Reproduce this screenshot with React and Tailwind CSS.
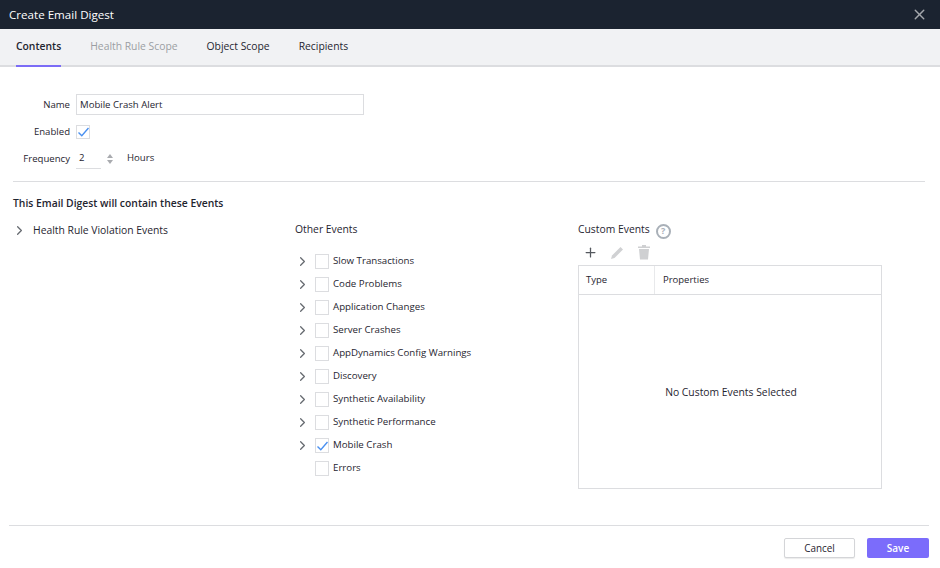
import { X, ChevronRight, Plus } from "lucide-react";

const events = [
  { name: "Slow Transactions", expand: true },
  { name: "Code Problems", expand: true },
  { name: "Application Changes", expand: true },
  { name: "Server Crashes", expand: true },
  { name: "AppDynamics Config Warnings", expand: true },
  { name: "Discovery", expand: true },
  { name: "Synthetic Availability", expand: true },
  { name: "Synthetic Performance", expand: true },
  { name: "Mobile Crash", expand: true, checked: true },
  { name: "Errors", expand: false },
];

const Tick = () => (
  <svg width="11" height="10" viewBox="0 0 11 10" fill="none" stroke="#4a90f0" strokeWidth="1.4">
    <path d="M0.5 5.5 L3.8 8.8 L10.5 1" />
  </svg>
);

const Arrow = () => (
  <ChevronRight className="w-[15px] h-[15px] text-[#666a70]" strokeWidth={2} />
);

const App = () => {
  return (
    <div className="w-[940px] h-[568px] bg-white flex flex-col text-[10.35px] text-[#1f2530] overflow-hidden font-['Open_Sans',sans-serif]">
      {/* Title bar */}
      <div className="h-[29px] bg-[#1b2330] flex items-center justify-between pl-[9px] pr-[12px] shrink-0">
        <span className="text-white text-[11.6px]">Create Email Digest</span>
        <X className="w-[17px] h-[17px] text-[#a4a7ac]" strokeWidth={2} />
      </div>

      {/* Tabs */}
      <div className="h-[38px] bg-[#f1f2f4] border-b-2 border-[#dcdde0] flex pl-[16px] gap-[29px] shrink-0">
        <div className="h-[38px] border-b-2 border-[#7b6cf6] flex items-center font-semibold">Contents</div>
        <div className="h-[36px] flex items-center text-[#9b9ea3]">Health Rule Scope</div>
        <div className="h-[36px] flex items-center">Object Scope</div>
        <div className="h-[36px] flex items-center">Recipients</div>
      </div>

      {/* Form */}
      <div className="pt-[27px] pl-[13px] pr-[15px] flex-1 flex flex-col">
        <div className="flex items-center h-[21px] text-[9.6px]">
          <label className="w-[57px] text-right pt-[1px]">Name</label>
          <div className="ml-[6px] w-[288px] h-[21px] border border-[#dcdde0] flex items-center px-[3px] pt-[1px]">
            Mobile Crash Alert
          </div>
        </div>
        <div className="flex items-center h-[14px] mt-[10px] text-[9.6px]">
          <label className="w-[57px] text-right">Enabled</label>
          <div className="ml-[6px] w-[14px] h-[14px] border border-[#dcdde0] flex items-center justify-center">
            <Tick />
          </div>
        </div>
        <div className="flex items-center h-[20px] mt-[10px] text-[9.6px]">
          <label className="w-[57px] text-right mt-[1px]">Frequency</label>
          <div className="ml-[6px] w-[25px] h-[20px] border-b border-[#dcdde0] pl-[3px] flex items-center">2</div>
          <div className="ml-[6px] flex flex-col gap-[2px]">
            <div className="w-0 h-0 border-x-[3.5px] border-x-transparent border-b-[4px] border-b-[#a9abaf]" />
            <div className="w-0 h-0 border-x-[3.5px] border-x-transparent border-t-[4px] border-t-[#a9abaf]" />
          </div>
          <span className="ml-[14px] -mt-[1px]">Hours</span>
        </div>

        <div className="mt-[12px] border-t border-[#dcdde0]" />
        <div className="mt-[14px] font-semibold leading-[14px]">This Email Digest will contain these Events</div>

        <div className="flex mt-[13px]">
          {/* Health rule events */}
          <div className="w-[282px] flex items-start h-[16px]">
            <div className="-ml-[1px]">
              <Arrow />
            </div>
            <span className="ml-[6px] leading-[16px] -mt-[1px]">Health Rule Violation Events</span>
          </div>

          {/* Other events */}
          <div className="w-[283px] -mt-[2px]">
            <div className="leading-[16px]">Other Events</div>
            <div className="mt-[17px] flex flex-col gap-[8px]">
              {events.map((ev) => (
                <div key={ev.name} className="flex items-center h-[15px]">
                  <div className="w-[20px] flex -mt-[1px]">{ev.expand && <Arrow />}</div>
                  <div className="w-[14px] h-[15px] border border-[#dcdde0] flex items-center justify-center">
                    {ev.checked && <Tick />}
                  </div>
                  <span className="ml-[4px] text-[9.7px]">{ev.name}</span>
                </div>
              ))}
            </div>
          </div>

          {/* Custom events */}
          <div className="w-[304px] -mt-[1px]">
            <div className="flex items-center h-[16px]">
              <span>Custom Events</span>
              <div className="ml-[6px] mt-[2px] w-[15px] h-[15px] rounded-full border-2 border-[#a9b0b8] flex items-center justify-center text-[9px] font-bold text-[#a9b0b8]">
                ?
              </div>
            </div>
            <div className="flex items-center h-[20px] mt-[4px] pl-[5px] gap-[12px]">
              <Plus className="w-[15px] h-[15px] text-[#55585e]" strokeWidth={2} />
              <svg width="15" height="15" viewBox="0 0 15 15" fill="#d0d1d3">
                <path d="M1 14 L2 10.5 L10.5 2 L13 4.5 L4.5 13 Z" />
              </svg>
              <svg width="14" height="16" viewBox="0 0 14 16" fill="#cfd0d2">
                <path d="M1 2.5 H5 V1 H9 V2.5 H13 V4 H1 Z M2 5 H12 L11 15.5 H3 Z" />
              </svg>
            </div>
            <div className="mt-[3px] h-[224px] border border-[#dcdde0] flex flex-col">
              <div className="h-[29px] border-b border-[#dcdde0] flex shrink-0 text-[9.5px]">
                <div className="w-[76px] border-r border-[#e8e9eb] flex items-center pl-[7px] pt-[1px]">Type</div>
                <div className="flex items-center pl-[8px] pt-[1px]">Properties</div>
              </div>
              <div className="flex-1 flex items-center justify-center pl-[2px] pt-[3px]">
                No Custom Events Selected
              </div>
            </div>
          </div>
        </div>
      </div>

      {/* Footer */}
      <div className="mx-[9px] mr-[11px] h-[43px] border-t border-[#dcdde0] flex items-start justify-end pt-[12px] gap-[12px] shrink-0">
        <button className="w-[71px] h-[20px] border border-[#d4d5d8] rounded-[2px] bg-white shadow-[0_1px_1px_rgba(0,0,0,0.08)] text-[9.9px]">
          Cancel
        </button>
        <button className="w-[62px] h-[20px] rounded-[2px] bg-[#7b6cfb] text-white font-semibold text-[10px]">Save</button>
      </div>
    </div>
  );
};

export default App;
